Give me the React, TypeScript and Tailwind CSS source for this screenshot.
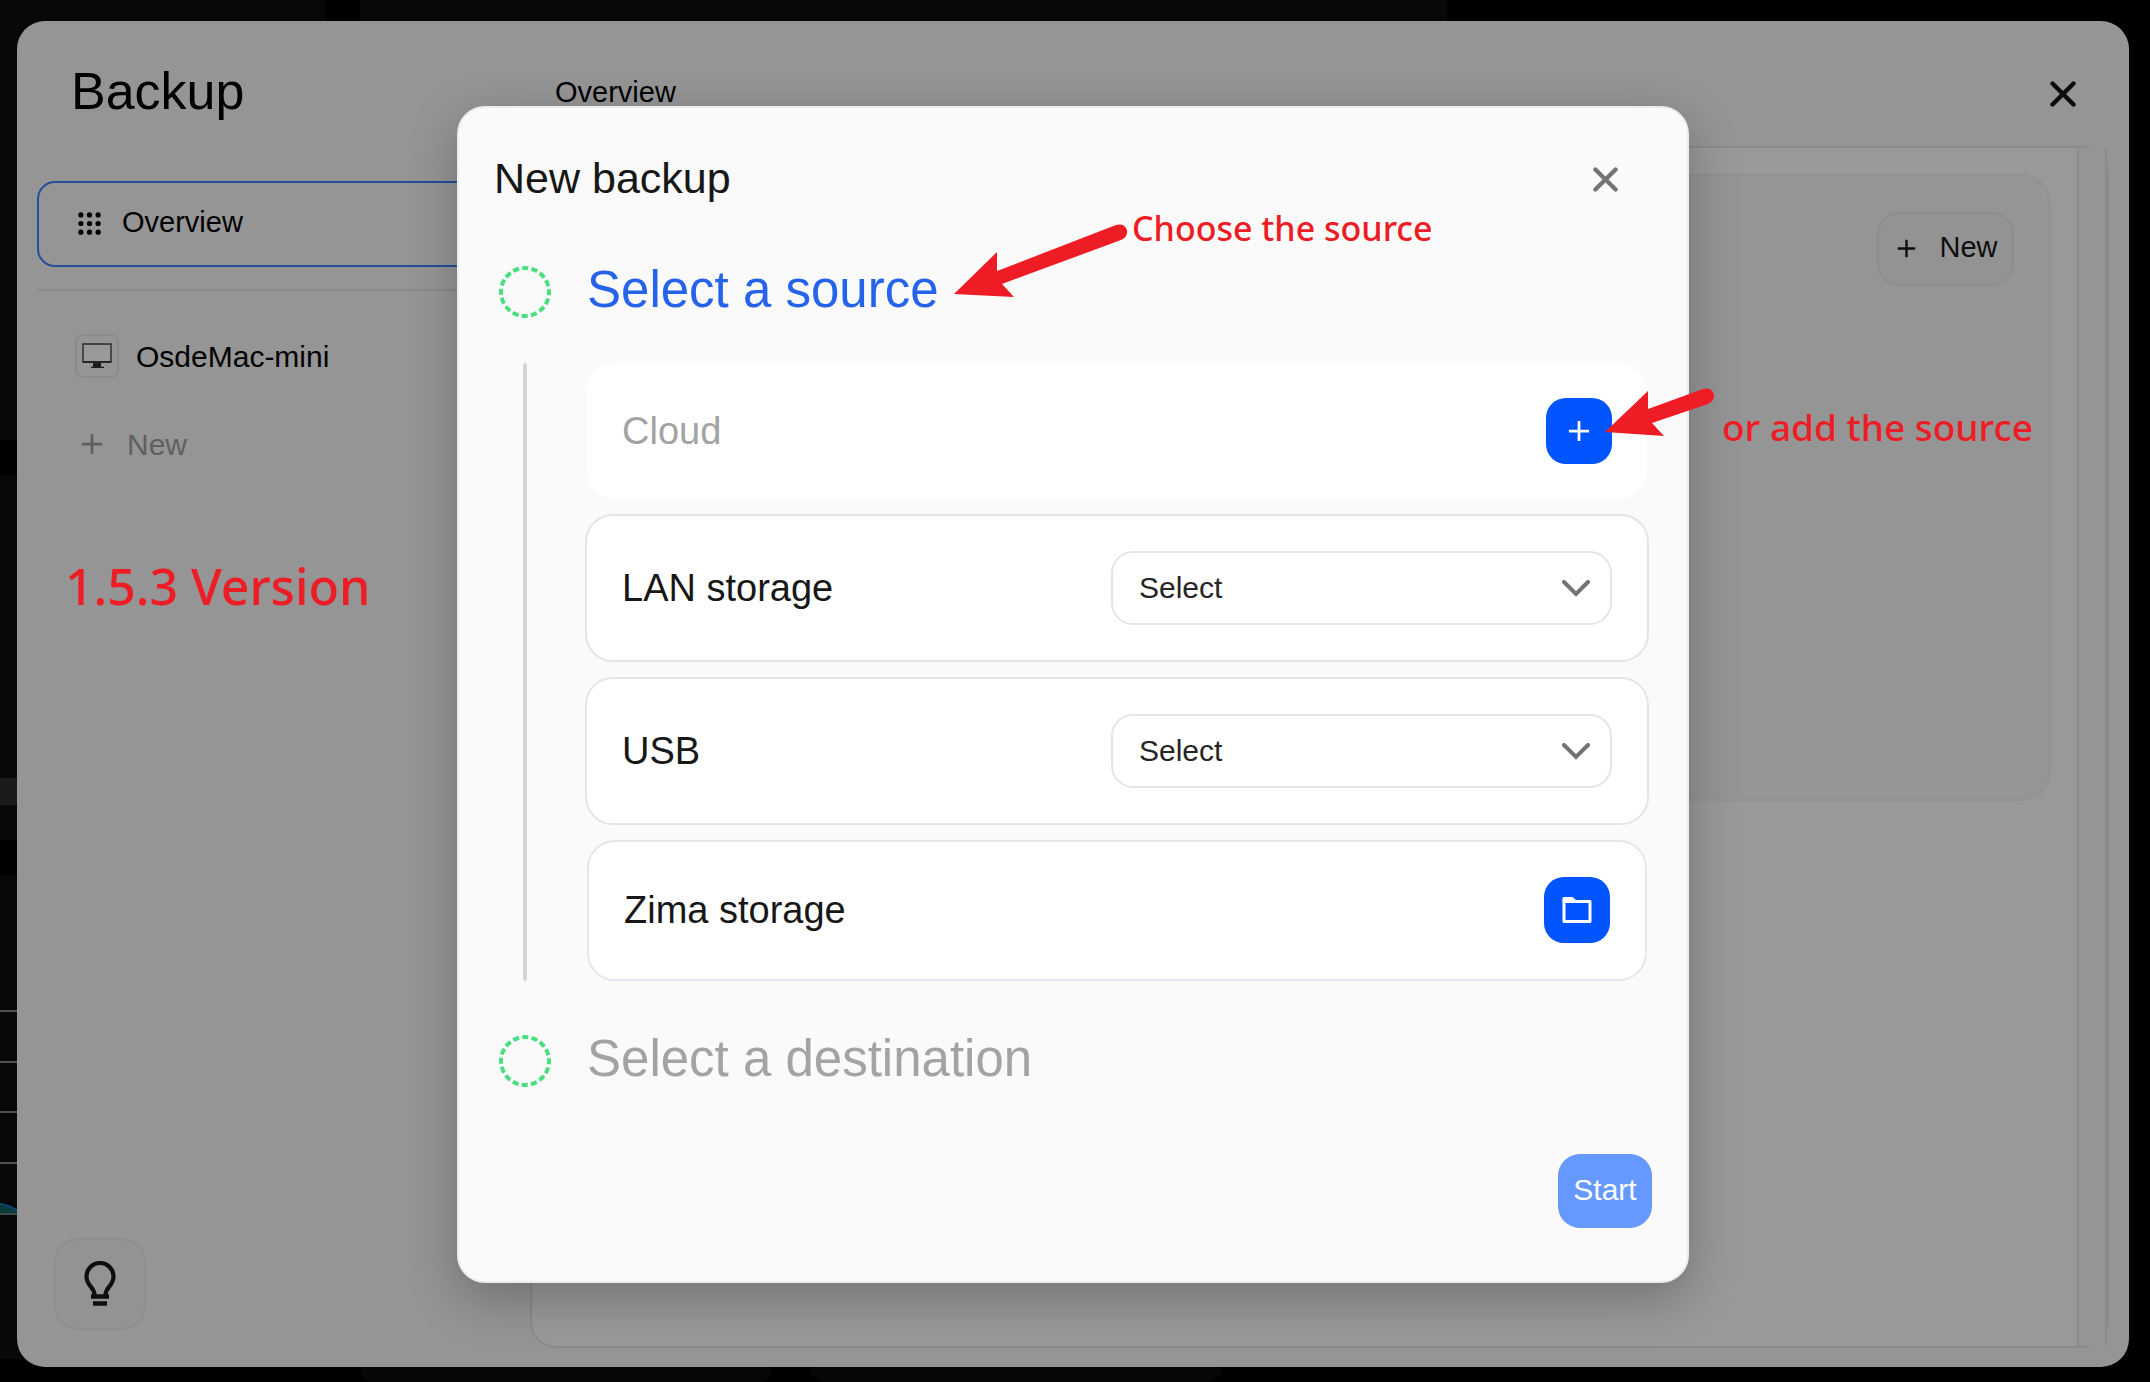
import { useState } from "react";

type StorageRowProps = {
  id: string;
  label: string;
};

const cardLabel = "text-[38px] leading-[48px]";

const DottedCircle = () => (
  <svg viewBox="0 0 52 52" className="size-[52px] shrink-0" fill="none" aria-hidden="true">
    <circle
      cx="26"
      cy="26"
      r="24"
      stroke="#4ade80"
      strokeWidth="4"
      pathLength="160"
      strokeDasharray="6.6 3.4"
      strokeDashoffset="3"
    />
  </svg>
);

const Plus = ({ className }: { className: string }) => (
  <svg viewBox="0 0 24 24" className={className} fill="none" stroke="currentColor" aria-hidden="true">
    <path d="M12 1v22M1 12h22" strokeWidth="3" />
  </svg>
);

const Cross = ({ className }: { className: string }) => (
  <svg viewBox="0 0 26 26" className={className} fill="none" stroke="currentColor" aria-hidden="true">
    <path d="M2.5 2.5l21 21M23.5 2.5l-21 21" strokeWidth="4.4" strokeLinecap="round" />
  </svg>
);

// dimmed dashboard that peeks out around the window
const Desktop = () => (
  <svg width="1500" height="1382" className="absolute top-0 left-0" aria-hidden="true">
    <path d="M0 0h325v440H0zM360 0h1087v60H360zM0 475h60v365H0zM0 875h60v484H0z" fill="#080808" />
    <path d="M360 1340h412v26q0 16-16 16H376q-16 0-16-16zM810 1340h412v26q0 16-16 16H826q-16 0-16-16z" fill="#060606" />
    <path d="M0 778h60v27H0z" fill="#191b1a" />
    <path d="M0 1011h60M0 1062h60M0 1112h60M0 1163h60" stroke="#505052" strokeWidth="2" />
    <path d="M0 1205q10 1 20 8v1H0z" fill="#083b3a" />
    <path d="M0 1204q9 1 20 8" stroke="#0b4a78" strokeWidth="2" fill="none" />
    <path d="M0 1214h60" stroke="#3c4a50" strokeWidth="2" />
  </svg>
);

const StorageRow = ({ id, label }: StorageRowProps) => {
  const [value, setValue] = useState<string>("");

  return (
    <div className="-mx-0.5 flex h-[148px] items-center justify-between rounded-[28px] border-2 border-[#e5e5e5] bg-white px-[35px]">
      <label htmlFor={id} className={cardLabel}>
        {label}
      </label>
      <div className="relative w-[501px]">
        <select
          id={id}
          value={value}
          onChange={(e) => setValue(e.target.value)}
          className="h-[74px] w-full appearance-none rounded-[22px] border-2 border-[#e5e5e5] bg-white px-[26px] text-[30px] text-[#262626]"
        >
          <option value="">Select</option>
        </select>
        <svg
          viewBox="0 0 28 18"
          className="pointer-events-none absolute top-[29px] right-[22px] h-[18px] w-[28px]"
          fill="none"
          aria-hidden="true"
        >
          <path d="M2 2l12 12L26 2" stroke="#737373" strokeWidth="4" strokeLinecap="round" />
        </svg>
      </div>
    </div>
  );
};

const Sidebar = () => (
  <aside className="flex w-[513px] shrink-0 flex-col px-5">
    <h1 className="mt-10 pl-[34px] text-[52px] leading-[60px] text-black">Backup</h1>
    <nav className="mt-[60px] flex flex-col">
      <button className="flex h-[86px] items-center gap-[21px] rounded-[18px] border-2 border-[#234f9b] pb-0.5 pl-[39px] text-[29px]">
        <svg viewBox="0 0 24 24" className="size-[23px]" aria-hidden="true">
          {[3, 12, 21].map((y) =>
            [3, 12, 21].map((x) => <circle key={`${x}-${y}`} cx={x} cy={y} r="2.7" />)
          )}
        </svg>
        Overview
      </button>
      <hr className="mt-[22px] border-t-2 border-[#8b8b8b]" />
      <button className="mt-[43px] flex h-11 items-center gap-[17px] pl-[38px] text-[30px]">
        <span className="flex size-11 items-center justify-center rounded-lg border-2 border-[#8c8c8c]">
          <svg viewBox="0 0 30 26" className="h-[26px] w-[30px]" aria-hidden="true">
            <path d="M1 1h28v18H1z" fill="#999" stroke="#2a2a2a" strokeWidth="1.4" />
            <path d="M1 18.200h28v1.600H1zM11 20h8v4h-8zM9 23.800h13v1.200H9z" fill="#1c1c1c" />
          </svg>
        </span>
        OsdeMac-mini
      </button>
      <button className="mt-11 flex h-11 items-center gap-6 pl-11 text-[30px] text-[#5f5f5f]">
        <Plus className="size-[22px]" />
        New
      </button>
    </nav>
    <p className="mt-[84px] pl-7 font-['Noto_Sans',sans-serif] text-[50px] leading-[72px] font-medium text-[#ee1c24]">
      1.5.3 Version
    </p>
    <button
      aria-label="Tips"
      className="mt-auto mb-[37px] ml-[17px] flex size-[92px] items-center justify-center rounded-3xl border-2 border-[#8e8e8e] bg-[#939393] text-[#0e0e0e]"
    >
      <svg viewBox="0 0 32 46" className="h-[46px] w-8" fill="none" stroke="currentColor" aria-hidden="true">
        <path
          d="M10.500 34C10.500 26 2.500 25 2.500 15.500a13.500 13.500 0 0 1 27 0C29.500 25 21.500 26 21.500 34"
          strokeWidth="4.200"
        />
        <path d="M7 35.500h18M9 42.500h14" strokeWidth="4.500" />
      </svg>
    </button>
  </aside>
);

const Content = () => (
  <main className="flex min-w-0 flex-1 flex-col pr-5 pb-[19px]">
    <header className="flex h-[125px] shrink-0 items-center justify-between pt-5 pr-[33px] pl-[25px]">
      <h2 className="mb-1 text-[29px] leading-10">Overview</h2>
      <button aria-label="Close">
        <Cross className="size-[26px] text-[#0c0c0c]" />
      </button>
    </header>
    <div className="flex flex-1 rounded-[26px] border-2 border-[#8b8b8b] bg-[#999]">
      <div className="flex-1 p-[26px]">
        <section className="flex h-[627px] items-start justify-end rounded-[30px] border-2 border-[#929292] bg-[#959595] pt-9 pr-[35px]">
          <button className="flex h-[74px] w-[137px] items-center justify-center gap-[23px] rounded-[22px] border-2 border-[#8d8d8d] bg-[#939393] pb-0.5 pl-1 text-[29px] text-[#0e0e0e]">
            <Plus className="size-[19px]" />
            New
          </button>
        </section>
      </div>
      <div className="w-[30px] border-x-2 border-[#8b8b8b] bg-[#959595]" />
    </div>
  </main>
);

const NewBackupDialog = () => (
  <div
    role="dialog"
    aria-labelledby="dialog-title"
    className="w-[1232px] rounded-[28px] border-2 border-[#ececec] bg-[#fafafa] pr-10 pb-[53px] pl-9 text-[#171717] shadow-[0_16px_50px_rgba(0,0,0,0.25)]"
  >
    <header className="flex items-center justify-between pt-10 pr-[29px]">
      <h2 id="dialog-title" className="-ml-px text-[43px] leading-[60px]">
        New backup
      </h2>
      <button aria-label="Close dialog" className="pt-1">
        <Cross className="size-[25px] text-[#737373]" />
      </button>
    </header>

    <div className="mt-12 grid grid-cols-[60px_1fr] items-center gap-x-8">
      <div className="flex h-[72px] items-center justify-center">
        <DottedCircle />
      </div>
      <h3 className="pb-1 text-[51px] leading-[60px] text-[#2563eb]">Select a source</h3>

      <div className="mt-[35px] w-1 self-stretch justify-self-center rounded-full bg-[#d4d4d4]" />
      <div className="mt-[35px] flex flex-col gap-[15px]">
        <div className="flex h-[136px] items-center justify-between rounded-[28px] bg-white px-[35px]">
          <span className="text-[38px] leading-[48px] text-[#a3a3a3]">Cloud</span>
          <button
            aria-label="Add cloud"
            className="flex size-[66px] items-center justify-center rounded-[20px] bg-[#0055ff] text-white"
          >
            <Plus className="size-[22px]" />
          </button>
        </div>
        <StorageRow id="lan" label="LAN storage" />
        <StorageRow id="usb" label="USB" />
        <div className="flex h-[141px] items-center justify-between rounded-[28px] border-2 border-[#e5e7eb] bg-white px-[35px]">
          <span className={cardLabel}>Zima storage</span>
          <button
            aria-label="Choose folder"
            className="flex size-[66px] items-center justify-center rounded-[20px] bg-[#0055ff]"
          >
            <svg viewBox="0 0 30 28" className="h-7 w-[30px]" fill="none" aria-hidden="true">
              <path d="M2 5.500h26v20H2z" stroke="#fff" strokeWidth="3" strokeLinejoin="round" />
              <path d="M0.500 6.500V2.500Q0.500 1 2 1H10.500l4 3.500v2z" fill="#fff" />
            </svg>
          </button>
        </div>
      </div>

      <div className="mt-11 flex h-[72px] items-center justify-center">
        <DottedCircle />
      </div>
      <h3 className="mt-11 pb-1 text-[51px] leading-[60px] text-[#a3a3a3]">Select a destination</h3>
    </div>

    <footer className="mt-[57px] -mr-[5px] flex justify-end">
      <button className="h-[74px] w-[94px] rounded-[22px] bg-[#6699ff] pb-0.5 text-[30px] text-white">Start</button>
    </footer>
  </div>
);

// hand-drawn hints laid over the dialog
const Notes = () => (
  <div className="pointer-events-none absolute inset-0 font-['Noto_Sans',sans-serif] leading-[48px] font-medium text-[#ee1c24]">
    <svg viewBox="0 0 2112 1346" className="absolute inset-0 size-full" fill="#ee1c24" aria-hidden="true">
      <path d="M937 273L980 231L980 250L1099 204Q1107 202 1110 209Q1111 216 1104 219L985 263L997 276Z" />
      <path d="M1588 411L1631 370L1631 388L1686 368Q1694 366 1697 373Q1698 380 1691 383L1635 402L1647 415Z" />
    </svg>
    <p className="absolute top-[183px] left-[1115px] text-[34px] whitespace-nowrap">Choose the source</p>
    <p className="absolute top-[382px] left-[1705px] text-[37px] whitespace-nowrap">or add the source</p>
  </div>
);

const App = () => {
  return (
    <div className="relative flex min-h-screen overflow-hidden bg-black pt-[21px] pr-[21px] pb-[15px] pl-[17px] font-['Liberation_Sans',Arial,sans-serif]">
      <Desktop />
      <div className="relative flex flex-1 rounded-[28px] bg-[#959595] text-black">
        <Sidebar />
        <Content />
        <div className="absolute inset-0 flex items-center justify-center">
          <NewBackupDialog />
        </div>
        <Notes />
      </div>
    </div>
  );
};

export default App;
